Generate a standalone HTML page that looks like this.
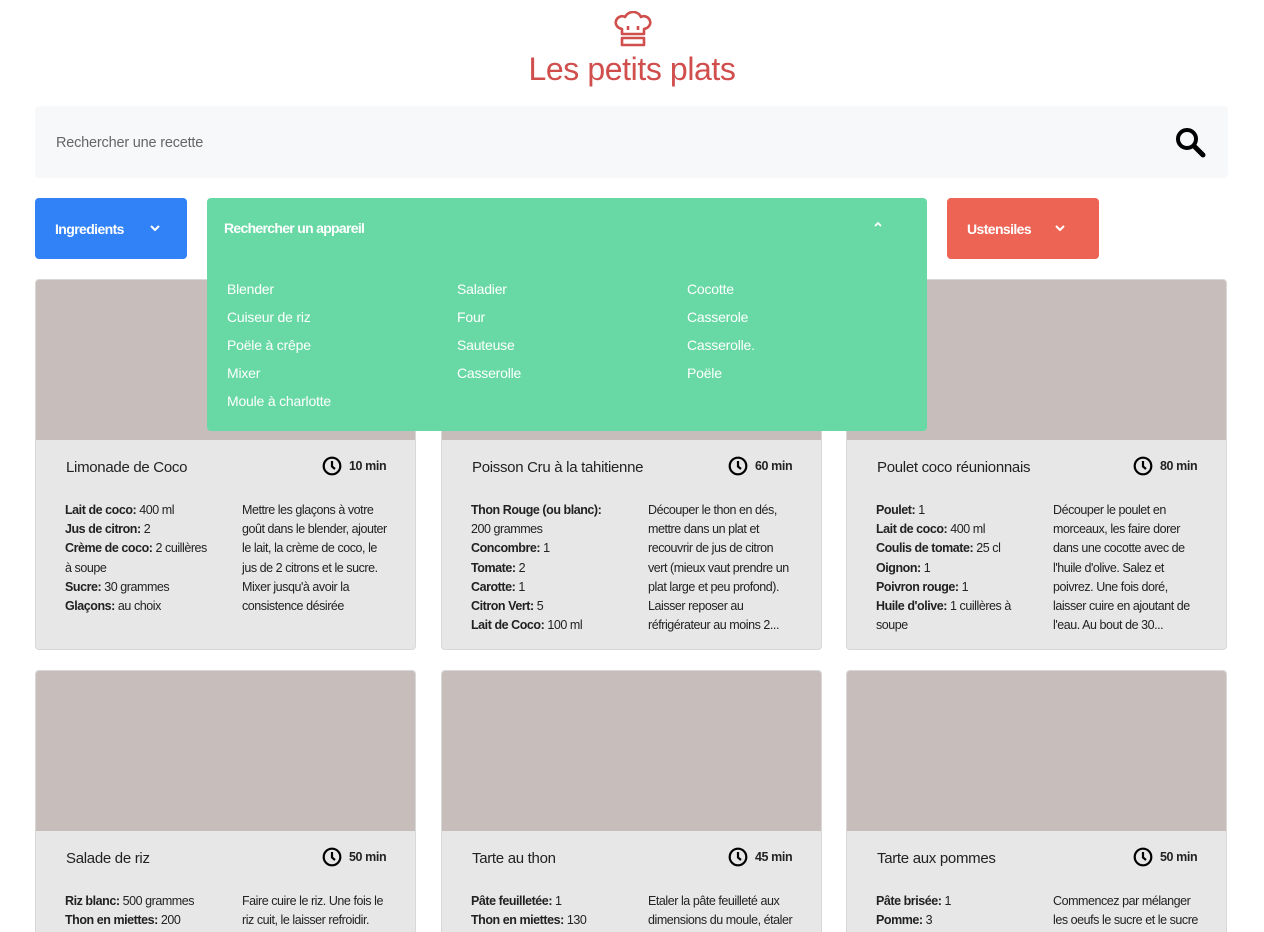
<!DOCTYPE html>
<html><head><meta charset="utf-8"><style>
*{margin:0;padding:0;box-sizing:border-box}
html,body{width:1264px;height:932px;overflow:hidden}
body{background:#fff;font-family:"Liberation Sans",sans-serif;color:#222;position:relative}
.abs{position:absolute}
h1{position:absolute;top:51px;left:0;width:1264px;text-align:center;font-weight:400;font-size:32px;color:#d04f4d;letter-spacing:-0.4px}
.search{left:35px;top:106px;width:1193px;height:72px;background:#f7f8fa;border-radius:4px}
.search span{position:absolute;left:21px;top:29px;font-size:14.5px;color:#666;letter-spacing:-0.2px}
.btn{top:198px;height:61px;border-radius:4px;color:#fff;font-weight:700;font-size:14px;letter-spacing:-0.6px}
.card{width:381px;height:371px;background:#e7e7e7;border:1px solid #d8d8d8;border-radius:4px;overflow:hidden}
.img{height:160px;background:#c7bebc}
.t{position:absolute;left:30px;top:179px;font-size:15px;letter-spacing:-0.3px;color:#222}
.tm{position:absolute;left:286px;top:176px;font-size:12.5px;font-weight:700;letter-spacing:-0.4px;display:flex;align-items:center;gap:7px}
.ing,.desc{position:absolute;top:221px;font-size:12.5px;line-height:19.2px;letter-spacing:-0.45px;white-space:nowrap;color:#222}
.ing{left:29px}.desc{left:206px}
b{font-weight:700}
.dd{left:207px;top:198px;width:720px;height:233px;background:#68d9a4;border-radius:4px;color:#fff}
.dd .h{position:absolute;left:17px;top:22px;font-weight:700;font-size:14px;letter-spacing:-0.7px}
.col{position:absolute;top:77px;font-size:14px;line-height:28px;letter-spacing:-0.2px}
</style></head><body>
<svg class="abs" style="left:613px;top:11px" width="40" height="36" viewBox="0 0 40 36" fill="none" stroke="#d04f4d" stroke-width="2.6" stroke-linejoin="round">
<path d="M9 23 V18 C4 17 2 13 3 10 C4 6 9 4 12 6 C14 2 18 1 20 1 C23 1 26 2 28 6 C31 4 36 6 37 10 C38 13 36 17 31 18 V23 Z"/>
<path d="M9 27 H31 V34 H9 Z"/>
<path d="M15 15 V19 M25 15 V19"/>
</svg>
<h1>Les petits plats</h1>
<div class="abs search"><span>Rechercher une recette</span>
<svg class="abs" style="left:1138px;top:19px" width="34" height="34" viewBox="0 0 34 34"><circle cx="14" cy="14" r="9" fill="none" stroke="#000" stroke-width="4"/><path d="M21 21 L30 30" stroke="#000" stroke-width="5" stroke-linecap="round"/></svg></div>

<div class="abs btn" style="left:35px;width:152px;background:#3282f7"><span class="abs" style="left:20px;top:23px">Ingredients</span><svg class="abs" style="left:114px;top:26px" width="12" height="8" viewBox="0 0 12 8"><path d="M2 2 L6 6 L10 2" stroke="#fff" stroke-width="2" fill="none"/></svg></div>
<div class="abs btn" style="left:947px;width:152px;background:#ed6454"><span class="abs" style="left:20px;top:23px">Ustensiles</span><svg class="abs" style="left:107px;top:26px" width="12" height="8" viewBox="0 0 12 8"><path d="M2 2 L6 6 L10 2" stroke="#fff" stroke-width="2" fill="none"/></svg></div>

<div class="abs card" style="left:35px;top:279px"><div class="img"></div><div class="t">Limonade de Coco</div><div class="tm"><svg width="20" height="20" viewBox="0 0 20 20"><circle cx="10" cy="10" r="8.3" fill="none" stroke="#000" stroke-width="2.2"/><path d="M10 5 V10.5 L13 13" stroke="#000" stroke-width="2.2" fill="none"/></svg>10 min</div>
<div class="ing"><b>Lait de coco:</b> 400 ml<br><b>Jus de citron:</b> 2<br><b>Crème de coco:</b> 2 cuillères<br>à soupe<br><b>Sucre:</b> 30 grammes<br><b>Glaçons:</b> au choix</div>
<div class="desc">Mettre les glaçons à votre<br>goût dans le blender, ajouter<br>le lait, la crème de coco, le<br>jus de 2 citrons et le sucre.<br>Mixer jusqu'à avoir la<br>consistence désirée</div></div>

<div class="abs card" style="left:441px;top:279px"><div class="img"></div><div class="t">Poisson Cru à la tahitienne</div><div class="tm"><svg width="20" height="20" viewBox="0 0 20 20"><circle cx="10" cy="10" r="8.3" fill="none" stroke="#000" stroke-width="2.2"/><path d="M10 5 V10.5 L13 13" stroke="#000" stroke-width="2.2" fill="none"/></svg>60 min</div>
<div class="ing"><b>Thon Rouge (ou blanc):</b><br>200 grammes<br><b>Concombre:</b> 1<br><b>Tomate:</b> 2<br><b>Carotte:</b> 1<br><b>Citron Vert:</b> 5<br><b>Lait de Coco:</b> 100 ml</div>
<div class="desc">Découper le thon en dés,<br>mettre dans un plat et<br>recouvrir de jus de citron<br>vert (mieux vaut prendre un<br>plat large et peu profond).<br>Laisser reposer au<br>réfrigérateur au moins 2...</div></div>

<div class="abs card" style="left:846px;top:279px"><div class="img"></div><div class="t">Poulet coco réunionnais</div><div class="tm"><svg width="20" height="20" viewBox="0 0 20 20"><circle cx="10" cy="10" r="8.3" fill="none" stroke="#000" stroke-width="2.2"/><path d="M10 5 V10.5 L13 13" stroke="#000" stroke-width="2.2" fill="none"/></svg>80 min</div>
<div class="ing"><b>Poulet:</b> 1<br><b>Lait de coco:</b> 400 ml<br><b>Coulis de tomate:</b> 25 cl<br><b>Oignon:</b> 1<br><b>Poivron rouge:</b> 1<br><b>Huile d'olive:</b> 1 cuillères à<br>soupe</div>
<div class="desc">Découper le poulet en<br>morceaux, les faire dorer<br>dans une cocotte avec de<br>l'huile d'olive. Salez et<br>poivrez. Une fois doré,<br>laisser cuire en ajoutant de<br>l'eau. Au bout de 30...</div></div>

<div class="abs card" style="left:35px;top:670px"><div class="img"></div><div class="t">Salade de riz</div><div class="tm"><svg width="20" height="20" viewBox="0 0 20 20"><circle cx="10" cy="10" r="8.3" fill="none" stroke="#000" stroke-width="2.2"/><path d="M10 5 V10.5 L13 13" stroke="#000" stroke-width="2.2" fill="none"/></svg>50 min</div>
<div class="ing"><b>Riz blanc:</b> 500 grammes<br><b>Thon en miettes:</b> 200</div>
<div class="desc">Faire cuire le riz. Une fois le<br>riz cuit, le laisser refroidir.</div></div>

<div class="abs card" style="left:441px;top:670px"><div class="img"></div><div class="t">Tarte au thon</div><div class="tm"><svg width="20" height="20" viewBox="0 0 20 20"><circle cx="10" cy="10" r="8.3" fill="none" stroke="#000" stroke-width="2.2"/><path d="M10 5 V10.5 L13 13" stroke="#000" stroke-width="2.2" fill="none"/></svg>45 min</div>
<div class="ing"><b>Pâte feuilletée:</b> 1<br><b>Thon en miettes:</b> 130</div>
<div class="desc">Etaler la pâte feuilleté aux<br>dimensions du moule, étaler</div></div>

<div class="abs card" style="left:846px;top:670px"><div class="img"></div><div class="t">Tarte aux pommes</div><div class="tm"><svg width="20" height="20" viewBox="0 0 20 20"><circle cx="10" cy="10" r="8.3" fill="none" stroke="#000" stroke-width="2.2"/><path d="M10 5 V10.5 L13 13" stroke="#000" stroke-width="2.2" fill="none"/></svg>50 min</div>
<div class="ing"><b>Pâte brisée:</b> 1<br><b>Pomme:</b> 3</div>
<div class="desc">Commencez par mélanger<br>les oeufs le sucre et le sucre</div></div>

<div class="abs dd"><div class="h">Rechercher un appareil</div>
<svg class="abs" style="left:666px;top:23px" width="10" height="7" viewBox="0 0 10 7"><path d="M2 5 L5 2 L8 5" stroke="#fff" stroke-width="1.8" fill="none"/></svg>
<div class="col" style="left:20px">Blender<br>Cuiseur de riz<br>Poële à crêpe<br>Mixer<br>Moule à charlotte</div>
<div class="col" style="left:250px">Saladier<br>Four<br>Sauteuse<br>Casserolle</div>
<div class="col" style="left:480px">Cocotte<br>Casserole<br>Casserolle.<br>Poële</div>
</div>
</body></html>
